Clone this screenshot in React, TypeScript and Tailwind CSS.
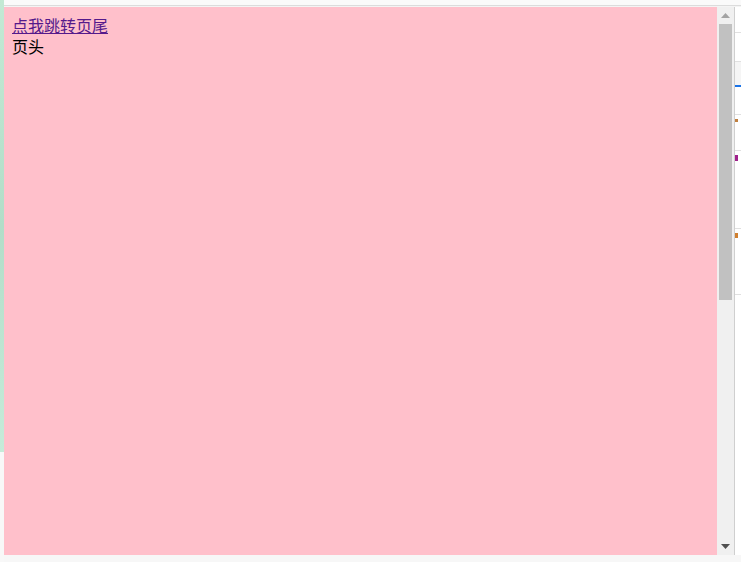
export default function App() {
  return (
    <div className="w-[741px] h-[562px] flex bg-[#f8f8f8] overflow-hidden" style={{ fontFamily: '"Noto Sans CJK SC", "Noto Sans", sans-serif' }}>
      {/* left blurred strip */}
      <div className="w-[4px] shrink-0 flex flex-col">
        <div className="h-[452px] bg-gradient-to-b from-[#c3e9d4] via-[#b2ddc8] to-[#c6ebd9]" />
        <div className="flex-1 bg-[#f8f8f8]" />
      </div>
      <div className="flex-1 flex flex-col">
        {/* top strip */}
        <div className="h-[6px] bg-[#fafafa] border-b border-[#dcdcdc] shrink-0" />
        <div className="h-[1px] bg-[#f4f4f4] shrink-0" />
        <div className="flex h-[548px] shrink-0">
          {/* page */}
          <div className="w-[713px] bg-[#ffc0cb] p-[8px] text-[16px] leading-[21px] text-black">
            <a href="#footer" className="underline text-[#551a8b] decoration-[#551a8b]">点我跳转页尾</a>
            <div>页头</div>
          </div>
          {/* scrollbar */}
          <div className="w-[17px] bg-[#f0f0f0] flex flex-col items-center">
            <div className="h-[17px] flex items-center justify-center">
              <svg width="9" height="5" viewBox="0 0 9 5"><path d="M4.5 0 L9 5 L0 5 Z" fill="#a3a3a3" /></svg>
            </div>
            <div className="w-[13px] h-[276px] bg-[#c1c1c1]" />
            <div className="flex-1" />
            <div className="h-[17px] flex items-center justify-center">
              <svg width="9" height="5" viewBox="0 0 9 5"><path d="M0 0 L9 0 L4.5 5 Z" fill="#505050" /></svg>
            </div>
          </div>
          {/* devtools edge */}
          <div className="w-[1px] bg-[#cfcfcf]" />
          <div className="flex-1 bg-white flex flex-col">
            <div className="h-[26px] border-b border-[#e0e0e0]" />
            <div className="h-[29px] border-b border-[#e0e0e0]" />
            <div className="h-[25px] bg-[#f5f5f5] border-b-2 border-[#1a73e8]" />
            <div className="h-[28px] border-b border-[#e0e0e0]" />
            <div className="h-[36px] border-b border-[#e0e0e0] pt-[4px]">
              <div className="w-[3px] h-[3px] bg-[#c08040]" />
            </div>
            <div className="h-[78px] border-b border-[#e0e0e0] pt-[4px]">
              <div className="w-[3px] h-[6px] bg-[#a0208c]" />
            </div>
            <div className="h-[66px] border-b border-[#e0e0e0] pt-[4px]">
              <div className="w-[3px] h-[5px] bg-[#d08030]" />
            </div>
            <div className="flex-1" />
          </div>
        </div>
        <div className="flex-1 bg-[#f7f7f7]" />
      </div>
    </div>
  );
}
